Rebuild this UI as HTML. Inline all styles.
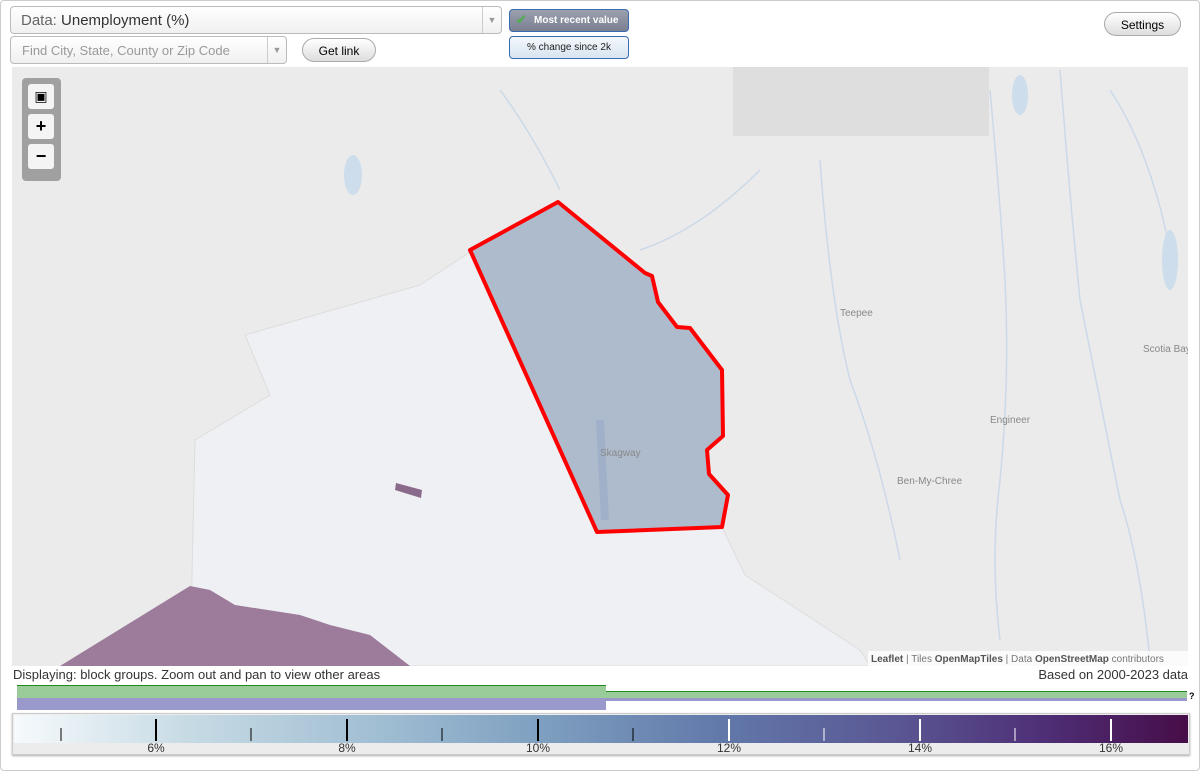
<!DOCTYPE html>
<html><head><style>
body{margin:0;width:1200px;height:771px;overflow:hidden;background:#fff;font-family:"Liberation Sans",sans-serif;position:relative}
.frame{position:absolute;left:0;top:0;width:1198px;height:769px;border:1px solid #ccc;border-radius:4px}
.abs{position:absolute}
.sel{border:1px solid #bbb;border-radius:4px;background:linear-gradient(#fff,#f0f0f0);box-sizing:border-box}
.arr{position:absolute;right:0;top:0;bottom:0;width:18px;border-left:1px solid #ccc;color:#999;font-size:9px;text-align:center}
.btn{border:1px solid #aaa;border-radius:12px;background:linear-gradient(#fff,#ddd);font-size:12px;text-align:center;box-sizing:border-box}
</style></head><body>
<div class="frame"></div>
<div class="abs sel" style="left:10px;top:6px;width:492px;height:28px;font-size:15px;color:#333;padding:5px 0 0 10px"><span style="color:#666">Data:</span> Unemployment (%)<div class="arr" style="padding-top:8px">▼</div></div>
<div class="abs sel" style="left:10px;top:36px;width:277px;height:28px;font-size:13px;color:#999;padding:6px 0 0 11px">Find City, State, County or Zip Code<div class="arr" style="padding-top:8px">▼</div></div>
<div class="abs btn" style="left:302px;top:38px;width:74px;height:24px;padding-top:5px">Get link</div>
<div class="abs" style="left:509px;top:9px;width:120px;height:23px;border:1px solid #3a6ab0;border-radius:4px;background:linear-gradient(#9aa0ae,#7a8090);color:#fff;font-size:10px;font-weight:bold;box-sizing:border-box;padding:5px 0 0 24px">Most recent value<span style="position:absolute;left:6px;top:2px;color:#5a5;font-size:13px">✔</span></div>
<div class="abs" style="left:509px;top:36px;width:120px;height:23px;border:1px solid #3a6ab0;border-radius:4px;background:linear-gradient(#f4f8fc,#d8e4f0);color:#222;font-size:10px;box-sizing:border-box;padding:5px 0 0 0;text-align:center">% change since 2k</div>
<div class="abs btn" style="left:1104px;top:12px;width:77px;height:24px;padding-top:5px">Settings</div>

<svg class="abs" style="left:12px;top:67px" width="1176" height="599" viewBox="12 67 1176 599">
<rect x="12" y="67" width="1176" height="599" fill="#ebebeb"/>
<rect x="733" y="67" width="256" height="69" fill="#dedede"/>
<g fill="none" stroke="#ccd9e8" stroke-width="1.5">
<path d="M990 90 Q1000 200 1005 280 Q1010 380 1000 480 Q990 560 1000 640"/>
<path d="M1060 70 Q1070 200 1080 300 Q1100 400 1120 500 Q1140 560 1150 660"/>
<path d="M820 160 Q830 300 850 380 Q880 460 900 560"/>
<path d="M500 90 Q530 130 560 190"/>
<path d="M640 250 Q700 230 760 170"/>
<path d="M1110 90 Q1150 150 1170 250"/>
</g>
<g fill="#cdddec"><ellipse cx="353" cy="175" rx="9" ry="20"/><ellipse cx="1020" cy="95" rx="8" ry="20"/><ellipse cx="1170" cy="260" rx="8" ry="30"/></g>
<polygon points="245,335 420,285 470,252 597,532 722,527 745,575 860,650 870,666 190,666 195,440 270,395" fill="#eef0f3" stroke="#ddd"/>
<polygon points="60,666 190,586 210,590 235,605 300,615 330,625 370,635 410,666" fill="#9c7b9b"/>
<polygon points="396,483 422,490 421,498 395,490" fill="#8a6a8a"/>
<polygon points="470,250 558,202 645,273 652,276 658,302 677,327 690,328 722,370 723,436 707,450 709,474 728,495 722,527 597,532" fill="#aebbcd" stroke="#f00" stroke-width="4" stroke-linejoin="round"/>
<path d="M600 420 L605 520" stroke="#a0b0c8" stroke-width="8"/>
<g font-size="10" fill="#888"><text x="600" y="456">Skagway</text><text x="840" y="316">Teepee</text><text x="1143" y="352">Scotia Bay</text><text x="990" y="423">Engineer</text><text x="897" y="484">Ben-My-Chree</text></g>
<rect x="868" y="651" width="320" height="15" fill="rgba(255,255,255,.8)"/>
<text x="871" y="662" font-size="10" fill="#777"><tspan font-weight="bold" fill="#555">Leaflet</tspan> | Tiles <tspan font-weight="bold" fill="#555">OpenMapTiles</tspan> | Data <tspan font-weight="bold" fill="#555">OpenStreetMap</tspan> contributors</text>
</svg>
<div class="abs" style="left:22px;top:78px;width:39px;height:103px;background:#a0a0a0;border-radius:4px"></div>
<div class="abs" style="left:28px;top:84px;width:26px;height:25px;background:#f4f4f4;border-radius:3px;font-size:14px;text-align:center;line-height:25px">▣</div>
<div class="abs" style="left:28px;top:114px;width:26px;height:25px;background:#f4f4f4;border-radius:3px;font-size:18px;font-weight:bold;text-align:center;line-height:24px">+</div>
<div class="abs" style="left:28px;top:144px;width:26px;height:25px;background:#f4f4f4;border-radius:3px;font-size:18px;font-weight:bold;text-align:center;line-height:24px">−</div>

<div class="abs" style="left:13px;top:667px;font-size:13px;color:#333">Displaying: block groups. Zoom out and pan to view other areas</div>
<div class="abs" style="right:12px;top:667px;font-size:13px;color:#333">Based on 2000-2023 data</div>
<div class="abs" style="left:17px;top:685px;width:589px;height:12px;background:#9c9;border-top:1px solid #282"></div>
<div class="abs" style="left:606px;top:691px;width:581px;height:6px;background:#9c9;border-top:1px solid #282"></div>
<div class="abs" style="left:17px;top:698px;width:589px;height:12px;background:#99c"></div>
<div class="abs" style="left:606px;top:698px;width:581px;height:3px;background:#99c"></div>
<div class="abs" style="left:1189px;top:691px;font-size:9px;font-weight:bold">?</div>
<div class="abs" style="left:12px;top:713px;width:1178px;height:42px;border:1px solid #ccc;background:#ececec;box-sizing:border-box;box-shadow:0 1px 2px #aaa"></div>
<div class="abs" style="left:14px;top:715px;width:1174px;height:28px;background:linear-gradient(90deg,#f6fafc,#c6dae4 15%,#a3c0d4 30%,#7e9fc0 45%,#6279aa 60%,#5a5794 75%,#4e2e76 88%,#470d48)"></div>
<svg class="abs" style="left:0;top:715px" width="1200" height="40">
<g stroke="#000" stroke-width="2"><path d="M156 4V26M347 4V26M538 4V26"/></g>
<g stroke="#000"><path d="M61 13V26M251 13V26M442 13V26M633 13V26"/></g>
<g stroke="#fff" stroke-width="2"><path d="M729 4V26M920 4V26M1111 4V26"/></g>
<g stroke="#fff"><path d="M824 13V26M1015 13V26"/></g>
<g font-size="12" fill="#333" text-anchor="middle"><text x="156" y="37">6%</text><text x="347" y="37">8%</text><text x="538" y="37">10%</text><text x="729" y="37">12%</text><text x="920" y="37">14%</text><text x="1111" y="37">16%</text></g>
</svg>
</body></html>
